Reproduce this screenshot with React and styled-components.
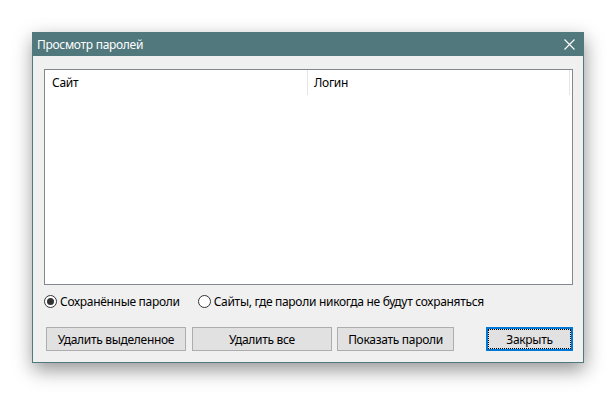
import React, { useState } from "react";
import styled, { createGlobalStyle } from "styled-components";

const GlobalStyle = createGlobalStyle`
  html, body {
    margin: 0;
    padding: 0;
    background: #ffffff;
  }
  body {
    font-family: "Noto Sans", "Liberation Sans", sans-serif;
    font-size: 12px;
    letter-spacing: -0.3px;
  }
`;

const Page = styled.div`
  width: 616px;
  height: 397px;
  padding: 32px 0 0 32px;
  box-sizing: border-box;
`;

const Window = styled.div`
  width: 552px;
  height: 331px;
  box-sizing: border-box;
  border: 1px solid #51787c;
  border-top: 0;
  background: #f0f0f0;
  display: flex;
  flex-direction: column;
  box-shadow: 1px 7px 18px rgba(0, 0, 0, 0.42);
`;

const TitleBar = styled.div`
  height: 24px;
  margin: 0 -1px;
  background: #51787c;
  display: flex;
  align-items: center;
  justify-content: space-between;
  padding: 0 9px 0 5px;
  color: #ffffff;
  flex-shrink: 0;
`;

const Title = styled.span`
  font-size: 12px;
`;

const CloseIcon = styled.svg`
  width: 11px;
  height: 11px;
  display: block;
`;

const Body = styled.div`
  flex: 1;
  display: flex;
  flex-direction: column;
  padding: 13px 10px 11px 11px;
`;

const ListBox = styled.div`
  height: 216px;
  box-sizing: border-box;
  border: 1px solid #828790;
  background: #ffffff;
`;

const HeaderRow = styled.div`
  display: flex;
  height: 25px;
`;

const HeaderCell = styled.div`
  width: ${({ $w }) => $w}px;
  box-sizing: border-box;
  padding-left: ${({ $pad }) => $pad}px;
  border-right: 1px solid #e5e5e5;
  display: flex;
  align-items: center;
  color: #000000;
`;

const RadioRow = styled.div`
  display: flex;
  align-items: center;
  height: 32px;
  gap: 18px;
`;

const RadioLabel = styled.label`
  display: flex;
  align-items: center;
  gap: 3px;
  color: #000000;
  cursor: default;
`;

const RadioCircle = styled.span`
  width: 13px;
  height: 13px;
  box-sizing: border-box;
  border: 1px solid #333333;
  border-radius: 50%;
  background: #ffffff;
  display: flex;
  align-items: center;
  justify-content: center;

  &::after {
    content: "";
    width: 7px;
    height: 7px;
    border-radius: 50%;
    background: ${({ $on }) => ($on ? "#333333" : "transparent")};
  }
`;

const ButtonRow = styled.div`
  display: flex;
  margin-top: auto;
  padding-left: 2px;
`;

const Button = styled.button`
  width: ${({ $w }) => $w}px;
  height: 24px;
  margin-left: ${({ $gap }) => $gap || 0}px;
  box-sizing: border-box;
  border: ${({ $focus }) => ($focus ? "2px solid #0078d7" : "1px solid #adadad")};
  background: #e1e1e1;
  font-family: "Noto Sans", "Liberation Sans", sans-serif;
  font-size: 12px;
  letter-spacing: -0.3px;
  color: #000000;
  padding: 0;
  position: relative;

  &::after {
    content: "";
    position: absolute;
    inset: 0;
    border: ${({ $focus }) => ($focus ? "1px dotted #000000" : "0")};
  }
`;

export default function App() {
  const [mode, setMode] = useState("saved");

  return (
    <Page>
      <GlobalStyle />
      <Window>
        <TitleBar>
          <Title>Просмотр паролей</Title>
          <CloseIcon viewBox="0 0 11 11">
            <path d="M0.5 0.5 L10.5 10.5 M10.5 0.5 L0.5 10.5" stroke="#ffffff" strokeWidth="1.1" />
          </CloseIcon>
        </TitleBar>
        <Body>
          <ListBox>
            <HeaderRow>
              <HeaderCell $w={263} $pad={7}>Сайт</HeaderCell>
              <HeaderCell $w={262} $pad={6}>Логин</HeaderCell>
            </HeaderRow>
          </ListBox>
          <RadioRow>
            <RadioLabel onClick={() => setMode("saved")}>
              <RadioCircle $on={mode === "saved"} />
              Сохранённые пароли
            </RadioLabel>
            <RadioLabel onClick={() => setMode("never")}>
              <RadioCircle $on={mode === "never"} />
              Сайты, где пароли никогда не будут сохраняться
            </RadioLabel>
          </RadioRow>
          <ButtonRow>
            <Button $w={140}>Удалить выделенное</Button>
            <Button $w={140} $gap={6}>Удалить все</Button>
            <Button $w={117} $gap={5}>Показать пароли</Button>
            <Button $w={87} $gap={32} $focus>Закрыть</Button>
          </ButtonRow>
        </Body>
      </Window>
    </Page>
  );
}
